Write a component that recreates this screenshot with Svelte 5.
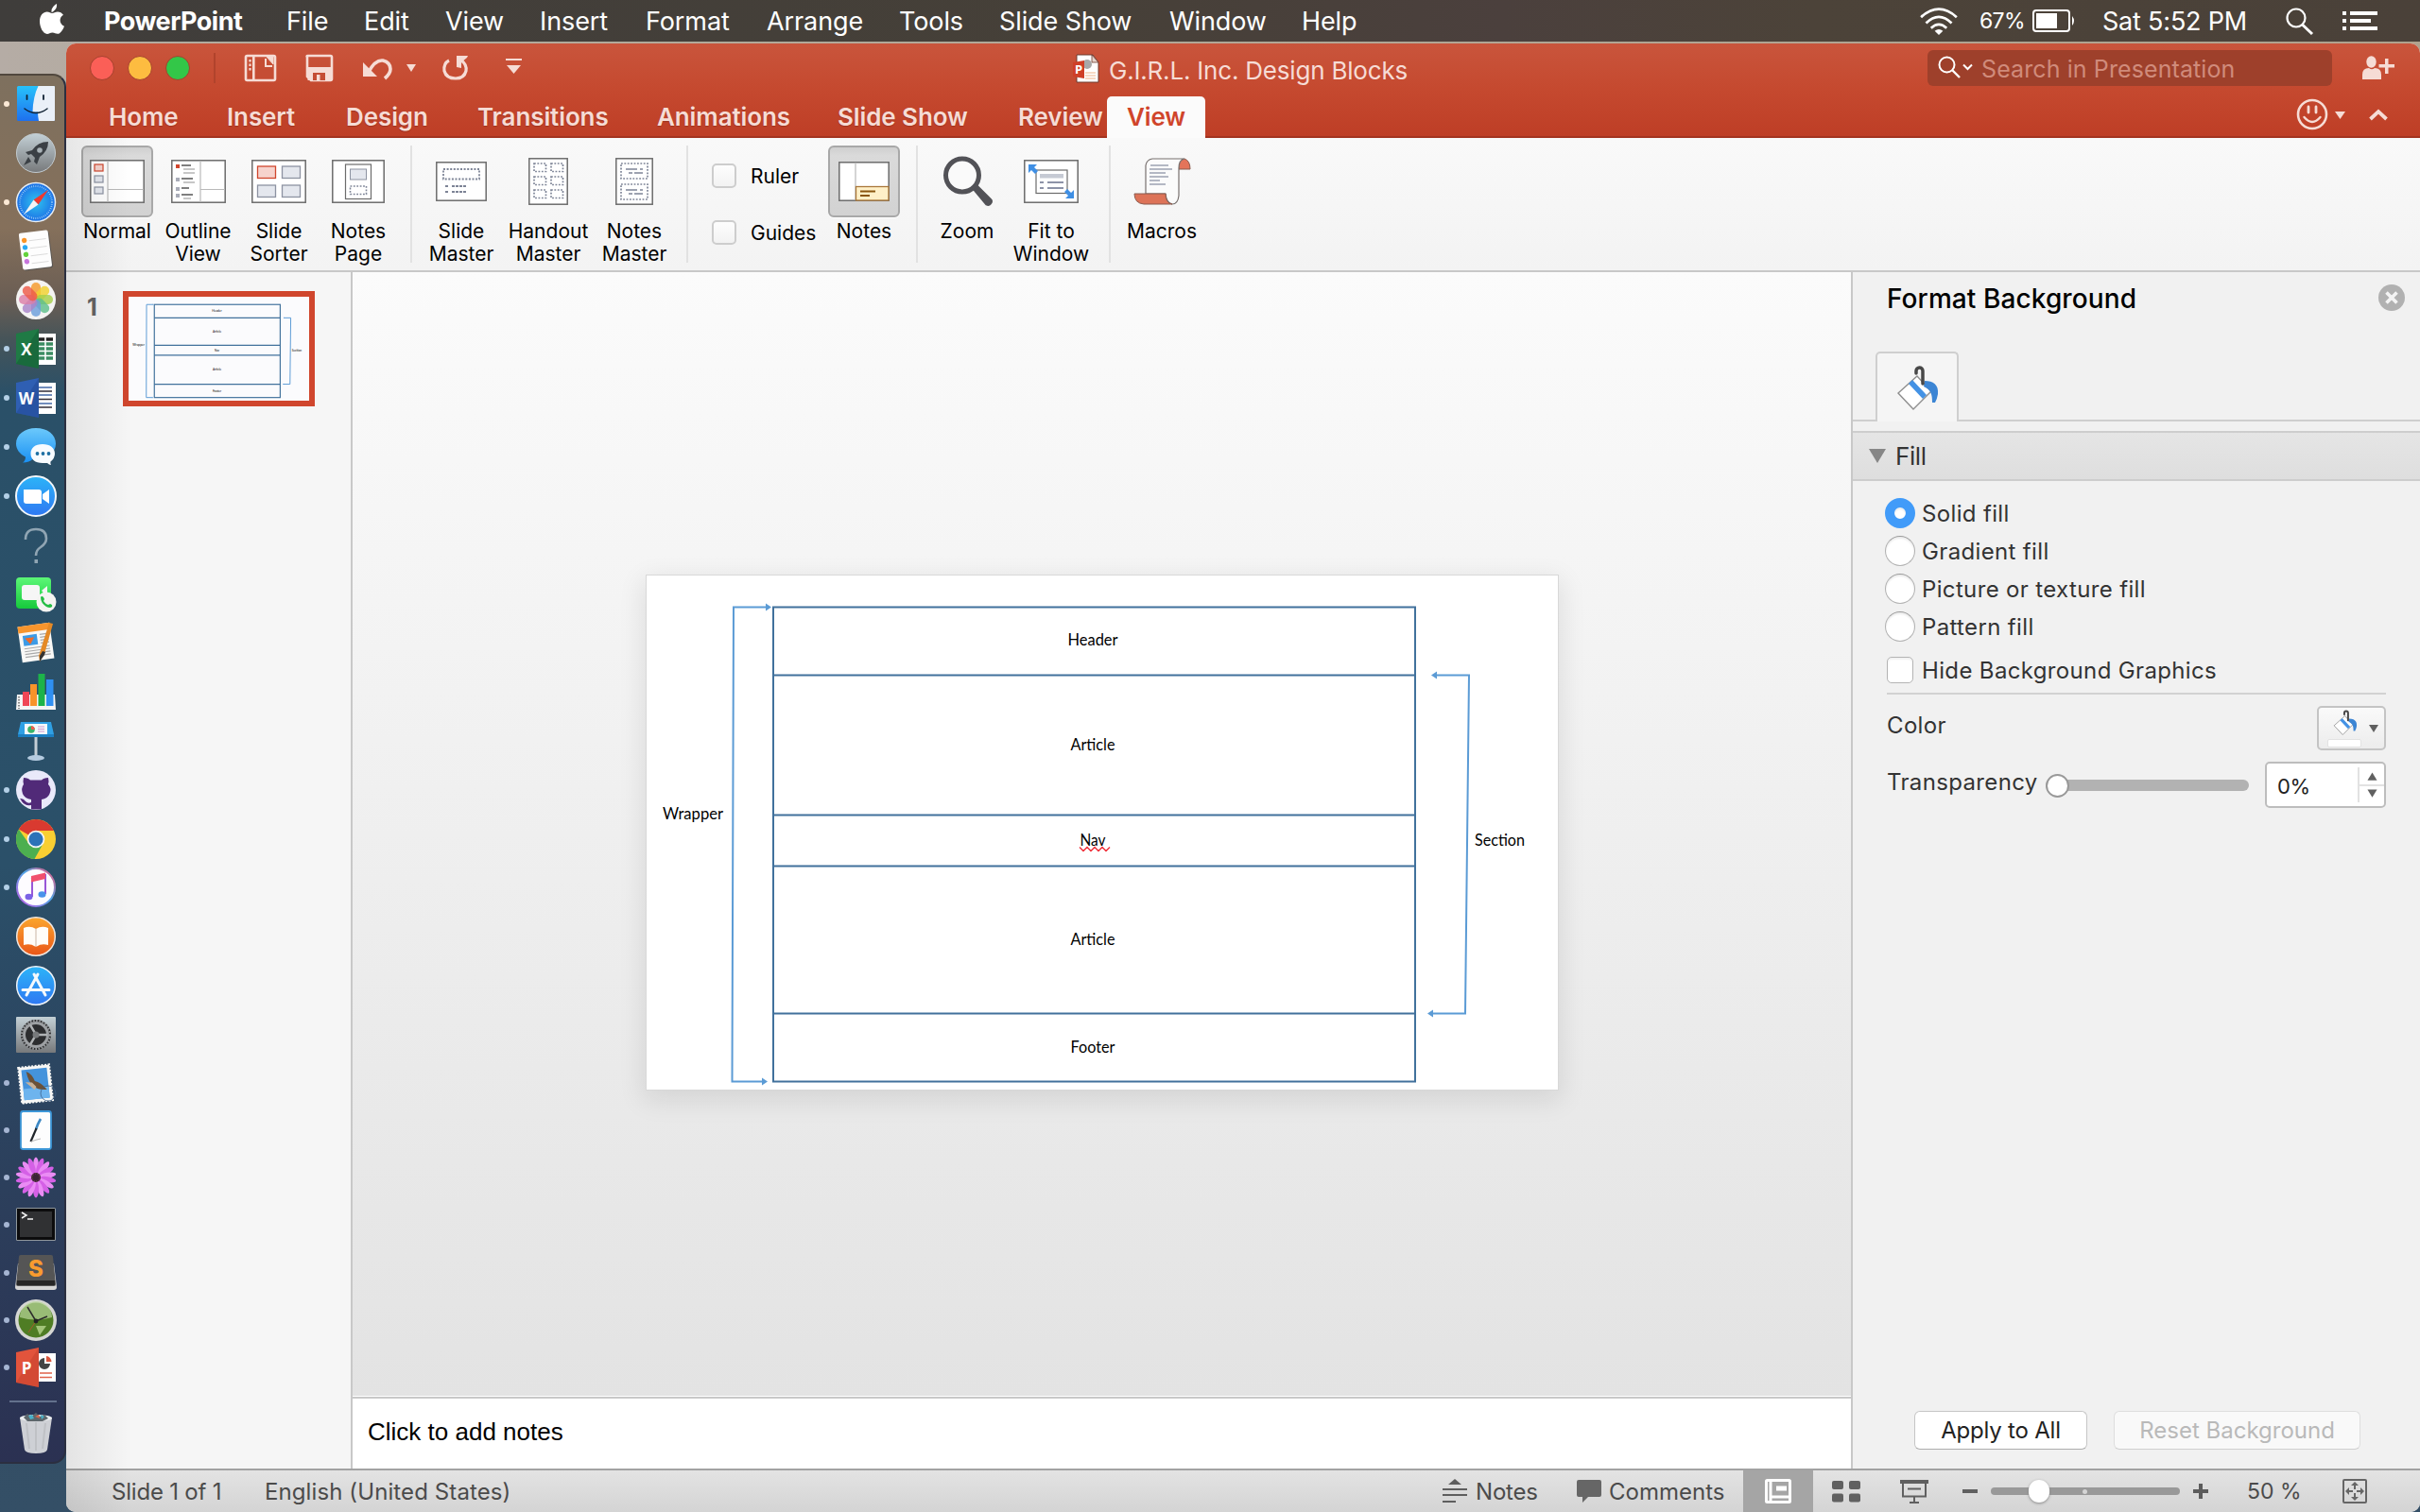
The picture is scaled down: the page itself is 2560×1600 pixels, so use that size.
<script>
  const menus = ['PowerPoint', 'File', 'Edit', 'View', 'Insert', 'Format', 'Arrange', 'Tools', 'Slide Show', 'Window', 'Help'];
  const tabs = ['Home', 'Insert', 'Design', 'Transitions', 'Animations', 'Slide Show', 'Review', 'View'];
  const dockMain = [
    ['finder', true], ['launchpad', false], ['safari', true], ['reminders', false], ['photos', false],
    ['excel', true], ['word', true], ['messages', true], ['zoom', true], ['unknown', false],
    ['facetime', false], ['pages', false], ['numbers', false], ['keynote', false], ['github', true],
    ['chrome', true], ['itunes', true], ['ibooks', false], ['appstore', false], ['prefs', false]
  ];
  const dockExtra = [
    ['mail', true], ['notepad', true], ['flower', true], ['terminal', true],
    ['sublime', true], ['clock', true], ['powerpoint', true]
  ];
  const petals = ['#f59a2c', '#f2d22e', '#a6cf4a', '#5fc08b', '#6c9fdc', '#a985c9', '#dc7fa8', '#ee5a48'];
  const fills = ['Solid fill', 'Gradient fill', 'Picture or texture fill', 'Pattern fill'];
  const blocks = [
    { label: 'Header', y: 73, w: 53 },
    { label: 'Article', y: 184, w: 47 },
    { label: 'Nav', y: 285, w: 27 },
    { label: 'Article', y: 390, w: 47 },
    { label: 'Footer', y: 504, w: 47 }
  ];
</script>

{#snippet slide(line, arrow)}
  <svg class="slide-art" viewBox="0 0 964 543">
    <g fill="none" stroke="#41719c" stroke-width={line}>
      <rect x="134" y="33" width="679" height="502" />
      <path d="M134 105H813M134 253H813M134 307H813M134 463H813" />
    </g>
    <g fill="none" stroke="#5b9bd5" stroke-width={arrow}>
      <path d="M127 33H92L90.500 535H124" />
      <path d="M835 105H870L866 463H830" />
    </g>
    <g fill="#5b9bd5">
      <path d="M126 29l6 4-6 4zM122 531l6 4-6 4zM836 101l-6 4 6 4zM832 459l-6 4 6 4z" />
    </g>
    <g class="slide-text">
      {#each blocks as b}
        <text x={472 - b.w / 2} y={b.y} textLength={b.w} lengthAdjust="spacingAndGlyphs">{b.label}</text>
      {/each}
      <text x="17" y="257" textLength="64" lengthAdjust="spacingAndGlyphs">Wrapper</text>
      <text x="876" y="285" textLength="53" lengthAdjust="spacingAndGlyphs">Section</text>
    </g>
    {#if line < 3}
      <path d="M458 287l4 4 4-4 4 4 4-4 4 4 4-4 4 4 4-4" fill="none" stroke="#f0323c" stroke-width="1.500" />
    {/if}
  </svg>
{/snippet}

{#snippet bucket()}
  <svg class="bucket" viewBox="0 0 44 48">
    <path d="M22 11L37 27L18 46L2 29Z" fill="#fff" stroke="#8e8e8e" stroke-width="1.400" />
    <path d="M16 15l4-4L35 27l-4 4z" fill="#4492e4" transform="translate(-3 4)" />
    <path d="M30 16c9 0 15 4 14 14q-1 6-3 9h-3c0-9-1-13-9-17z" fill="#3c85d4" />
    <path d="M21 8V5.500a3.500 3.500 0 0 1 7 0V19" fill="none" stroke="#484848" stroke-width="3.500" stroke-linecap="round" />
  </svg>
{/snippet}

{#snippet office(colour, dark, letter)}
  {#if letter === 'P'}
    <rect x="22" y="7" width="21" height="30" fill="#fff" />
    <path d="M31 12a6 6 0 1 0 6 6h-6z" fill="#444" />
    <path d="M33 10a6 6 0 0 1 5.500 6H33z" fill="#d9573f" />
    <path d="M26 28h13M26 32.500h13" stroke="#e0634c" stroke-width="1.600" />
  {:else if letter === 'X'}
    <rect x="22" y="6" width="21" height="33" fill="#fff" />
    <path d="M25 12h15" stroke="#222" stroke-width="3.500" />
    <path d="M25 17h15M25 22h15M25 27h15M25 32h15" stroke="#3b8c62" stroke-width="3.500" />
    <path d="M32 8v28" stroke="#fff" stroke-width="1.600" />
  {:else}
    <rect x="22" y="6" width="21" height="33" fill="#fff" />
    <path d="M25 11h14M25 19h14M25 28h14" stroke="#4468a8" stroke-width="1.500" />
    <path d="M25 15h14M25 23.500h14M25 32h14" stroke="#332e38" stroke-width="1.500" />
  {/if}
  <path d="M1 6L25 1V43L1 38Z" fill={colour} />
  <path d="M25 1V43L1 38z" fill={dark} opacity=".35" />
  <text class="office-letter" x="12" y="29" text-anchor="middle">{letter}</text>
{/snippet}

{#snippet dockIcon(name)}
  <svg class="dock-icon" viewBox="0 0 44 44">
    {#if name === 'finder'}
      <rect x="2" y="3" width="40" height="37" rx="1.500" fill="url(#finder)" />
      <path d="M24.500 3H41q1 0 1 1V39q0 1-1 1H25q-1-5-1-9.500h-5.500Q19 14 24.500 3z" fill="#eaf0f8" />
      <path d="M12.500 13v4M30 13v4" stroke="#123" stroke-width="1.800" stroke-linecap="round" />
      <path d="M10 27q12 9 24 0" fill="none" stroke="#123" stroke-width="1.500" stroke-linecap="round" />
    {:else if name === 'launchpad'}
      <circle cx="22" cy="22" r="20.500" fill="url(#silver)" stroke="#c2cbd0" />
      <path d="M35 10q-11 0-17 9l-7 2 3 3 3-1 4 4-1 4 3 3 3-8q9-6 9-16z" fill="#3b4045" />
      <path d="M14 26l-5 9 8-4z" fill="#3b4045" />
      <circle cx="26" cy="19" r="2.800" fill="#a9b2b7" />
    {:else if name === 'safari'}
      <circle cx="22" cy="22" r="20.500" fill="url(#safari)" stroke="#e8eef2" stroke-width="1.500" />
      <circle cx="22" cy="22" r="17" fill="none" stroke="#bfe4fb" stroke-width="2" stroke-dasharray=".6 1.600" />
      <path d="M35 9L24.500 24.500 19.500 19.500z" fill="#f0382e" />
      <path d="M9 35L24.500 24.500 19.500 19.500z" fill="#f4f4f4" />
    {:else if name === 'reminders'}
      <g transform="rotate(-7 22 22)">
        <rect x="7" y="3" width="31" height="39" rx="2" fill="#444a4c" opacity=".6" />
        <rect x="6" y="2" width="31" height="39" rx="2" fill="#fdfdfd" />
        <path d="M16 11h18M16 19h18M16 27h18M16 35h18" stroke="#dcdcdc" />
        <circle cx="11" cy="10" r="2.700" fill="#fb9426" /><circle cx="11" cy="17.500" r="2.700" fill="#29a9f4" />
        <circle cx="11" cy="25" r="2.700" fill="#63d23c" /><circle cx="11" cy="32.500" r="2.700" fill="#c876dc" />
      </g>
    {:else if name === 'photos'}
      <circle cx="22" cy="22" r="21" fill="#f4f3f2" />
      {#each petals as p, i}
        <rect x="17" y="4" width="10" height="18" rx="5" fill={p} opacity=".82" transform="rotate({i * 45} 22 22)" />
      {/each}
    {:else if name === 'excel'}
      {@render office('#1f7a45', '#0f4c2a', 'X')}
    {:else if name === 'word'}
      {@render office('#2f5fb3', '#1d3f86', 'W')}
    {:else if name === 'powerpoint'}
      {@render office('#e2543c', '#b63a25', 'P')}
    {:else if name === 'messages'}
      <path d="M22 2C10 2 1 9 1 18.500c0 6 4 11 10 14q0 4-3 6 7 0 11-4c14 1 24-6 24-16S34 2 22 2z" fill="url(#msg)" />
      <path d="M29 19c-8 0-12.500 4-12.500 10S21 39 29 39q3 0 5 0 2 2 4 2-1-2-.5-3.500Q42 34 42 29c0-6-5-10-13-10z" fill="#f7fbff" />
      <g fill="#1d6fa3"><circle cx="23.500" cy="29" r="1.900" /><circle cx="29.500" cy="29" r="1.900" /><circle cx="35.500" cy="29" r="1.900" /></g>
    {:else if name === 'zoom'}
      <circle cx="22" cy="22" r="21" fill="url(#blue)" stroke="#f2f6fa" stroke-width="2" />
      <path d="M9 15h16q3 0 3 3v12H12q-3 0-3-3zM29 20l7-5v15l-7-5z" fill="#fff" />
    {:else if name === 'unknown'}
      <path d="M11 16q0-11 11-11t11 10q0 5-6 9-5 3-5 9" fill="none" stroke="#90a5b3" stroke-width="2.600" />
      <rect x="20.500" y="37" width="3.500" height="4" fill="#90a5b3" />
    {:else if name === 'facetime'}
      <rect x="1" y="5" width="37" height="33" rx="4" fill="url(#green)" />
      <rect x="7" y="13" width="19" height="16" rx="3" fill="#f6f6f6" />
      <path d="M28 19l6-5v12z" fill="#f6f6f6" />
      <circle cx="33" cy="31" r="10.500" fill="#f4f4f2" />
      <path d="M27 26q1-2 3 0l1 2-1 2q2 3 5 4l2-1q3 1 2 3-2 2-6 0-6-4-6-10z" fill="#25bd45" />
    {:else if name === 'pages'}
      <g transform="rotate(-8 22 22)">
        <rect x="5" y="3" width="34" height="38" fill="#f8f8f6" />
        <rect x="5" y="3" width="34" height="7" fill="#f7952d" />
        <rect x="9" y="13" width="15" height="11" fill="#3c9be6" />
        <path d="M11 16h10l-5 7z" fill="#f06a28" />
        <path d="M27 14h9M27 17h9M27 20h9M27 23h9M9 27h27M9 30h27M9 33h27M9 36h27" stroke="#a9a9a9" stroke-width="1.200" />
      </g>
      <path d="M36 1l4 1-9 32-5 8-1-6z" fill="#e58a26" />
      <path d="M29 31l3 1-1 3-5 7 0-6z" fill="#333" />
    {:else if name === 'numbers'}
      <path d="M2 25h40l1 16H1z" fill="#f5f5f5" />
      <path d="M4 27v13" stroke="#888" stroke-dasharray="1.500 1.500" stroke-width="2" />
      <rect x="8" y="22" width="7" height="15" fill="#ef4656" /><rect x="16" y="14" width="7" height="23" fill="#f8932a" />
      <rect x="24.500" y="3" width="7" height="34" fill="#1db34a" /><rect x="33" y="9" width="7.500" height="28" fill="#2f90f2" />
    {:else if name === 'keynote'}
      <path d="M6 2h32l3 13H3z" fill="#2fa0e4" /><path d="M3 15h38v3H3z" fill="#1b7fc2" />
      <rect x="10" y="4" width="24" height="11" fill="#f5f8fa" />
      <circle cx="17" cy="10" r="3.800" fill="#3cb36a" /><path d="M17 10V6.200a3.800 3.800 0 0 1 3.800 3.800z" fill="#f1584c" />
      <path d="M24 7h7M24 9.500h7M24 12h7" stroke="#d49ad0" stroke-width="1.200" />
      <path d="M20.500 18h3v20h-3z" fill="#c4ced6" /><ellipse cx="22" cy="40" rx="9" ry="3" fill="#b5cbe0" />
    {:else if name === 'github'}
      <circle cx="22" cy="22" r="21" fill="#e9e9fa" />
      <path d="M9 9q5 0 7 2.500h12Q30 9 35 9q1 4 0 7 4 4 1.500 10-2 5-8.500 6v10.500H17V38q-7 1-10-4-1-2-2-3 4 0 6 3 3 3 6 1v-3Q10 31 8 26q-2-6 1-10-1-3 0-7z" fill="#512a78" />
    {:else if name === 'chrome'}
      <circle cx="22" cy="22" r="21" fill="#f9cf32" />
      <path d="M22 22L3.800 11.500A21 21 0 0 1 41 13H22z" fill="#d93a30" />
      <path d="M22 22L30 26 20.500 43A21 21 0 0 1 3.800 11.500L14 26z" fill="#4caf50" />
      <circle cx="22" cy="22" r="9.300" fill="#f5f5f5" /><circle cx="22" cy="22" r="7.600" fill="#2c72b8" />
    {:else if name === 'itunes'}
      <circle cx="22" cy="22" r="20" fill="#fdfcff" stroke="url(#tunes)" stroke-width="2" />
      <path d="M17 13l15-4v20M18 32V13.500" fill="none" stroke="#9857d8" stroke-width="2" />
      <path d="M17 10l15-3.500V13L17 16.500z" fill="#f1506e" />
      <ellipse cx="14.500" cy="32" rx="4" ry="3.300" fill="#7b62e6" /><ellipse cx="28.500" cy="29.500" rx="4" ry="3.300" fill="#4a92ea" />
    {:else if name === 'ibooks'}
      <circle cx="22" cy="22" r="20.300" fill="url(#orange)" stroke="#efe6df" stroke-width="1.500" />
      <path d="M22 14q-6-4-13-1v18q7-2 12 1.500h2q5-3.500 12-1.500V13q-7-3-13 1z" fill="#fffdf8" />
      <path d="M22 14v18" stroke="#c9b5a5" />
    {:else if name === 'appstore'}
      <circle cx="22" cy="22" r="20.300" fill="url(#blue)" stroke="#eef3f8" stroke-width="1.500" />
      <path d="M8 26.500h28M24 10L12 32M20 10l12 22" fill="none" stroke="#f5f9fc" stroke-width="3" stroke-linecap="round" />
    {:else if name === 'prefs'}
      <rect x="1" y="3" width="42" height="38" rx="1" fill="url(#silver)" />
      <circle cx="22" cy="22" r="16" fill="#2c2d2f" />
      <circle cx="22" cy="22" r="12.500" fill="none" stroke="#9da0a3" stroke-width="3" />
      <circle cx="22" cy="22" r="15" fill="none" stroke="#9da0a3" stroke-width="2" stroke-dasharray="1.600 1.600" />
      <path d="M22 22H34M22 22L16 11.600M22 22L16 32.400" stroke="#b0b3b5" stroke-width="2.500" />
      <circle cx="22" cy="22" r="3.500" fill="#77797b" />
    {:else if name === 'mail'}
      <g transform="rotate(-6 22 22)">
        <rect x="5" y="4" width="33" height="38" fill="#f7f7f5" stroke="#f7f7f5" stroke-width="2" stroke-dasharray="2 1.500" />
        <rect x="8" y="7" width="27" height="32" fill="#4493dc" />
        <rect x="8" y="27" width="27" height="12" fill="#6db4ee" />
        <path d="M13 9q6 3 8 11 6 2 12 10-10 0-14-5-5-5-6-16z" fill="#6b5138" />
        <path d="M11 20l7 1 4 5-2 3z" fill="#c9b298" />
      </g>
      <circle cx="35" cy="33" r="8" fill="none" stroke="#3a5a80" opacity=".7" />
    {:else if name === 'notepad'}
      <rect x="6" y="2" width="32" height="40" rx="2.500" fill="#fdfdfd" stroke="#3c97d8" stroke-width="1.800" />
      <path d="M27 10q-3 5-5 11" stroke="#3c88c4" stroke-width="2.600" fill="none" />
      <path d="M22.500 20l-6 14" stroke="#20252a" stroke-width="2.200" />
      <path d="M17 34q5-2 10-3" stroke="#b9b9b9" fill="none" />
    {:else if name === 'flower'}
      {#each Array(18) as _, i}
        <ellipse cx="22" cy="9.500" rx="3" ry="9" fill={i % 2 ? '#d560e6' : '#ea8cf4'} transform="rotate({i * 20} 22 22)" />
      {/each}
      <circle cx="22" cy="22" r="5" fill="#3a2238" /><circle cx="22" cy="22" r="4" fill="none" stroke="#8d5a50" stroke-dasharray="1 1.500" />
    {:else if name === 'terminal'}
      <rect x="1" y="4" width="42" height="35" rx="1.500" fill="#8f979c" /><rect x="2" y="5" width="40" height="33" fill="#0c0c0d" />
      <rect x="5" y="8" width="34" height="27" fill="#303133" />
      <path d="M7 9l5 3-5 3M13 16h6" fill="none" stroke="#f4f4f4" stroke-width="1.500" />
    {:else if name === 'sublime'}
      <path d="M3 12L0 37q0 3 3 3H41q3 0 3-3L41 12z" fill="#d6d6d6" />
      <path d="M6 3H38q2 0 2 2l3 29q0 2-2 2H3q-2 0-2-2L4 5q0-2 2-2z" fill="#555" />
      <path d="M2 30h40v5H2z" fill="#262626" />
      <text class="sublime-letter" x="22" y="26" text-anchor="middle">S</text>
    {:else if name === 'clock'}
      <circle cx="22" cy="22" r="22" fill="#d5d6d3" /><circle cx="22" cy="22" r="18.500" fill="#4f7d24" />
      <path d="M5 19a17 17 0 0 1 34 0q-17 5-34 0z" fill="#b9d79a" opacity=".7" />
      <path d="M22 28h11l-7 10z" fill="#c6e29c" opacity=".7" />
      <path d="M13 8l9 15M34 18l-12 5" stroke="#2c2c2c" stroke-width="1.500" /><path d="M22 23l-8 12" stroke="#a65a2c" />
      <circle cx="22" cy="23" r="2.400" fill="#222" />
    {:else if name === 'trash'}
      <path d="M5 4h34l-5 34q-1 4-12 4t-12-4z" fill="#d7d9dc" opacity=".95" />
      <path d="M12 10l3 27M22 9v30M32 10l-3 27" stroke="#bfc1c5" stroke-width="2" fill="none" />
      <ellipse cx="22" cy="4.500" rx="17" ry="3.600" fill="#eceef0" />
      <path d="M9 4l4-4 4 3 5-4 4 4 5-2 4 4-6 3H13z" fill="#5d666b" /><path d="M14 2l4-1 2 4-4 1zM27 1l4 2-3 3z" fill="#49b0c8" />
      <path d="M21 3l4-2 1 4z" fill="#d9634a" />
    {/if}
  </svg>
{/snippet}

<svg class="defs" width="0" height="0">
  <defs>
    <linearGradient id="finder" x1="0" y1="0" x2="0" y2="1"><stop offset="0" stop-color="#27c2fb" /><stop offset="1" stop-color="#1e70ee" /></linearGradient>
    <linearGradient id="silver" x1="0" y1="0" x2="0" y2="1"><stop offset="0" stop-color="#c3d0d6" /><stop offset="1" stop-color="#77797b" /></linearGradient>
    <radialGradient id="safari"><stop offset="0" stop-color="#2fc3ee" /><stop offset="1" stop-color="#1c6fe6" /></radialGradient>
    <linearGradient id="msg" x1="0" y1="0" x2="0" y2="1"><stop offset="0" stop-color="#6cc9fb" /><stop offset="1" stop-color="#1a91f4" /></linearGradient>
    <linearGradient id="blue" x1="0" y1="0" x2="0" y2="1"><stop offset="0" stop-color="#2cb4f8" /><stop offset="1" stop-color="#2f78f2" /></linearGradient>
    <linearGradient id="green" x1="0" y1="0" x2="0" y2="1"><stop offset="0" stop-color="#5cf777" /><stop offset="1" stop-color="#16c93c" /></linearGradient>
    <linearGradient id="orange" x1="0" y1="0" x2="0" y2="1"><stop offset="0" stop-color="#fba62c" /><stop offset="1" stop-color="#ea5618" /></linearGradient>
    <linearGradient id="tunes" x1="1" y1="0" x2="0" y2="1"><stop offset="0" stop-color="#f9557a" /><stop offset=".45" stop-color="#4fa5e8" /><stop offset="1" stop-color="#c85ae8" /></linearGradient>
  </defs>
</svg>

<div class="screen">
  <header class="menubar">
    <svg class="apple" viewBox="0 0 26 32">
      <path d="M18 0q.5 4-2 6.500T12.500 9Q12 5.500 14.300 3T18 0z" />
      <path d="M13 10c2 0 3.500-1.600 6-1.600 2.300 0 4.600 1.200 6 3.300-5 2.800-4.300 9.800 1 12-1.500 4-4.200 8.100-7 8.100-2.300 0-3-1.300-5.600-1.300-2.500 0-3.500 1.400-5.500 1.400C3.700 31.900 0 25 0 18.500 0 12 4 8.400 7.700 8.400 10 8.400 11.700 10 13 10z" />
    </svg>
    <nav class="menus">
      {#each menus as m, i}<span class:app-name={i === 0}>{m}</span>{/each}
    </nav>
    <div class="tray">
      <svg class="wifi" viewBox="0 0 42 30">
        <g fill="none" stroke="#fff" stroke-width="2.800"><path d="M1.500 10.500Q21-7 40.500 10.500M7 17Q21 3.500 35 17M12.500 22.500Q21 14.500 29.500 22.500" /></g>
        <path d="M16.500 25.500q4.500-3.500 9 0L21 30z" fill="#fff" />
      </svg>
      <span class="percent">67%</span>
      <svg class="battery" viewBox="0 0 46 24">
        <rect x="1" y="1" width="38" height="22" rx="3" fill="none" stroke="#fff" stroke-width="2" />
        <rect x="4" y="4" width="22" height="16" fill="#fff" /><path d="M42 7q4 5 0 10z" fill="#fff" />
      </svg>
      <span class="time">Sat 5:52 PM</span>
      <svg class="spot" viewBox="0 0 29 29"><circle cx="11" cy="11" r="9.500" fill="none" stroke="#fff" stroke-width="2.200" /><path d="M17.500 18L28 28" stroke="#fff" stroke-width="3" /></svg>
      <svg class="list" viewBox="0 0 37 20" fill="#fff"><path d="M0 0h4v4H0zM8 0h29v4H8zM0 8h4v4H0zM8 8h22v4H8zM0 16h4v4H0zM8 16h29v4H8z" /></svg>
    </div>
  </header>

  <div class="desktop">
    <aside class="dock">
      <div class="dock-group main">
        {#each dockMain as [name, on]}
          <div class="dock-item"><i class:on></i>{@render dockIcon(name)}</div>
        {/each}
      </div>
      <div class="dock-group extra">
        {#each dockExtra as [name, on]}
          <div class="dock-item"><i class:on></i>{@render dockIcon(name)}</div>
        {/each}
      </div>
      <hr />
      <div class="dock-item trash"><i></i>{@render dockIcon('trash')}</div>
    </aside>

    <main class="window">
      <div class="titlebar">
        <div class="title-row">
          <div class="lights"><b class="red"></b><b class="yellow"></b><b class="green"></b></div>
          <span class="rule"></span>
          <svg class="quick" viewBox="0 0 300 30" fill="none" stroke="#f6dcd5">
            <rect x="1" y="2" width="31" height="26" rx="1.500" stroke-width="2.600" />
            <path d="M9.500 2v26" stroke-width="2.200" /><path d="M5.500 6v12" stroke-width="2.200" stroke-dasharray="2.500 2" />
            <path d="M13 6h9l7 7v12H13z" fill="#c54d34" stroke="none" />
            <path d="M9 3v24M22 5v8h7" stroke-width="2" /><path d="M23 3h7v8z" fill="#f6dcd5" />
            <path d="M66.500 2h24q1.500 0 1.500 1.500v23q0 1.500-1.500 1.500H70l-4-4V3.500Q65 2 66.500 2z" stroke-width="2.600" />
            <path d="M66 15.500h26M68 16v12M90 16v12" stroke-width="3" />
            <path d="M66 16h25v11H70l-4-3z" fill="#f6dcd5" stroke="none" /><path d="M72 20h13v8H72z" fill="#c54d34" stroke="none" /><path d="M76 22h3.500v6H76z" fill="#f6dcd5" stroke="none" />
            <path d="M131 19q7-13 15-12 8 2 8 9 0 5-6 10" stroke-width="3.600" />
            <path d="M125 9v15h15z" fill="#f6dcd5" stroke="none" />
            <path d="M171 11h10l-5 8z" fill="#f6dcd5" stroke="none" />
            <path d="M216 7q-6 3-5 11 2 8 12 8 9 0 11-8 1-7-5-11" stroke-width="3.200" />
            <path d="M224 2h12l-1 2-6 5v6l-5-1z" fill="#f6dcd5" stroke="none" />
            <path d="M276 6h17" stroke-width="2" /><path d="M277 12h15l-7.500 9z" fill="#f6dcd5" stroke="none" />
          </svg>
          <div class="doc-title">
            <svg class="doc-icon" viewBox="0 0 28 31">
              <path d="M4 1h17l6 8v21H4z" fill="#fff" stroke="#6d3a2e" /><path d="M20 1v8h7z" fill="#e6d4cc" stroke="#6d3a2e" stroke-width=".8" />
              <circle cx="15" cy="11" r="5" fill="#a8a8a8" /><path d="M13 20h11M13 23h11M13 26h11" stroke="#efb389" stroke-width="1.200" />
              <path d="M0 9l12-2v19l-12-2z" fill="#cf3f27" /><text class="doc-p" x="6" y="21" text-anchor="middle">P</text>
            </svg>
            <span>G.I.R.L. Inc. Design Blocks</span>
          </div>
          <div class="search">
            <svg viewBox="0 0 37 24" fill="none" stroke="#fff"><circle cx="9.500" cy="9.500" r="8" stroke-width="2" /><path d="M15.500 15.500L23 23" stroke-width="2.400" /><path d="M27 9.500l4.500 4.500L36 9.500" stroke-width="2" /></svg>
            <span>Search in Presentation</span>
          </div>
          <svg class="share" viewBox="0 0 36 26" fill="#f6dcd5"><ellipse cx="10.500" cy="6.500" rx="5.200" ry="6.200" /><path d="M1 25v-5q0-7 7-7 3 2.500 6 0 7 0 7 7v5zM25 3h3.500v6H35v3.500h-6.500V19H25v-6.500h-6.500V9H25z" /></svg>
        </div>
        <nav class="tabs">
          {#each tabs as t}<span class:active={t === 'View'}>{t}</span>{/each}
          <svg class="feedback" viewBox="0 0 98 34" fill="none" stroke="#f6dcd5">
            <circle cx="17" cy="17" r="15" stroke-width="2.600" /><path d="M13 9v6M21 9v6" stroke-width="2.800" stroke-linecap="round" /><path d="M8.500 20q8.500 10 17 0" stroke-width="2.400" stroke-linecap="round" />
            <path d="M41 14h11l-5.500 8z" fill="#f6dcd5" stroke="none" /><path d="M78.500 22l8.500-8 8.500 8" stroke-width="3.800" />
          </svg>
        </nav>
      </div>

      <div class="ribbon">
        <div class="tool w84"><div class="frame pressed">
          <svg width="58" height="46" viewBox="0 0 58 46"><rect x=".8" y=".8" width="56.400" height="44.400" fill="#fff" stroke="#6c6c6c" stroke-width="1.500" /><path d="M19 1v44M19 31.500h38" stroke="#b9b9b9" stroke-width="1.200" /><rect x="5" y="5" width="9" height="7" fill="#f6d3cd" stroke="#d0462d" stroke-width="1.200" /><g fill="#e4e7ee" stroke="#8d93a2" stroke-width="1.200"><rect x="5" y="17" width="9" height="7" /><rect x="5" y="29" width="9" height="7" /></g></svg>
        </div><span>Normal</span></div>
        <div class="tool w87"><div class="frame">
          <svg width="58" height="46" viewBox="0 0 58 46"><rect x=".8" y=".8" width="56.400" height="44.400" fill="#fff" stroke="#6c6c6c" stroke-width="1.500" /><path d="M31 1v44M31 31.500h26" stroke="#b9b9b9" stroke-width="1.200" /><path d="M5 5h4v4H5z" fill="#d0462d" /><path d="M5 19h4v4H5zM5 29h4v4H5zM5 36h4v4H5z" fill="#a9acb8" /><path d="M11 6h10M11 20h12M11 30h8M11 37h12" stroke="#555" stroke-width="1.600" /><path d="M13 10h12M13 14h12M13 24h12M13 41h8" stroke="#b5b5b5" stroke-width="1.600" /></svg>
        </div><span>Outline<br />View</span></div>
        <div class="tool w84"><div class="frame">
          <svg width="58" height="46" viewBox="0 0 58 46"><rect x=".8" y=".8" width="56.400" height="44.400" fill="#fff" stroke="#6c6c6c" stroke-width="1.500" /><rect x="6.500" y="7" width="19" height="12.500" fill="#f6d3cd" stroke="#d0462d" stroke-width="1.300" /><g fill="#e4e7ee" stroke="#8d93a2" stroke-width="1.300"><rect x="32.500" y="7" width="19" height="12.500" /><rect x="6.500" y="27" width="19" height="12.500" /><rect x="32.500" y="27" width="19" height="12.500" /></g></svg>
        </div><span>Slide<br />Sorter</span></div>
        <div class="tool w84"><div class="frame">
          <svg width="56" height="46" viewBox="0 0 56 46"><rect x=".8" y=".8" width="54.400" height="44.400" fill="#fff" stroke="#6c6c6c" stroke-width="1.500" /><rect x="14.500" y="5" width="27" height="36.500" fill="#fff" stroke="#6c6c6c" stroke-width="1.200" /><rect x="19.500" y="10" width="17" height="11" fill="#e4e7ee" stroke="#8d93a2" /><rect x="19.500" y="28" width="17" height="8.500" fill="none" stroke="#7d8496" stroke-width="1.600" stroke-dasharray="1.800 1.600" /></svg>
        </div><span>Notes<br />Page</span></div>
        <div class="divider d1"></div>
        <div class="tool w92"><div class="frame">
          <svg width="54" height="42" viewBox="0 0 54 42"><rect x=".8" y=".8" width="52.400" height="40.400" fill="#fff" stroke="#6c6c6c" stroke-width="1.500" /><rect x="8" y="8" width="38" height="10.500" fill="none" stroke="#7d8496" stroke-width="1.800" stroke-dasharray="2 1.600" /><g stroke="#7d8496" stroke-width="1.800"><path d="M10 26h3M10 32h3" /><path d="M17 26h16M17 32h16" stroke-dasharray="3 1" /></g></svg>
        </div><span>Slide<br />Master</span></div>
        <div class="tool w92"><div class="frame">
          <svg width="42" height="50" viewBox="0 0 42 50"><rect x=".8" y=".8" width="40.400" height="48.400" fill="#fff" stroke="#6c6c6c" stroke-width="1.500" /><g fill="none" stroke="#7d8496" stroke-width="1.700" stroke-dasharray="1.800 1.600"><rect x="6" y="6" width="12.500" height="8.500" /><rect x="24" y="6" width="12.500" height="8.500" /><rect x="6" y="20" width="12.500" height="8.500" /><rect x="24" y="20" width="12.500" height="8.500" /><rect x="6" y="34" width="12.500" height="8.500" /><rect x="24" y="34" width="12.500" height="8.500" /></g></svg>
        </div><span>Handout<br />Master</span></div>
        <div class="tool w90"><div class="frame">
          <svg width="40" height="50" viewBox="0 0 40 50"><rect x=".8" y=".8" width="38.400" height="48.400" fill="#fff" stroke="#6c6c6c" stroke-width="1.500" /><g fill="none" stroke="#7d8496" stroke-width="1.700"><g stroke-dasharray="1.800 1.600"><rect x="6" y="6" width="28" height="16" /><rect x="6" y="28" width="28" height="16" /></g><path d="M11 12h12M14 16h4M20 16h9M26 12h3M11 34h12M14 38h4M20 38h9M26 34h3" stroke-width="1.500" /></g></svg>
        </div><span>Notes<br />Master</span></div>
        <div class="divider d2"></div>
        <div class="checks"><label><i></i>Ruler</label><label><i></i>Guides</label></div>
        <div class="tool w92"><div class="frame pressed">
          <svg width="54" height="42" viewBox="0 0 54 42"><rect x=".8" y=".8" width="52.400" height="40.400" fill="#fff" stroke="#6c6c6c" stroke-width="1.500" /><path d="M18 1v40" stroke="#b9b9b9" stroke-width="1.200" /><rect x="18.500" y="26.500" width="34.500" height="14.500" fill="#fff0c8" stroke="#a9773a" stroke-width="1.300" /><path d="M23 31.500h16M23 36h10" stroke="#8a560f" stroke-width="2" /></svg>
        </div><span class="notes-label">Notes</span></div>
        <div class="divider d3"></div>
        <div class="tool w88"><div class="frame">
          <svg width="53" height="54" viewBox="0 0 53 54"><circle cx="21" cy="20.500" r="17.500" fill="#fafafa" stroke="#525257" stroke-width="5" /><path d="M32 34l3.500-3.500L51 46q2 2 0 4.500t-4.500 1z" fill="#525257" stroke="#525257" stroke-width="2" stroke-linejoin="round" /></svg>
        </div><span>Zoom</span></div>
        <div class="tool w90"><div class="frame">
          <svg width="58" height="46" viewBox="0 0 58 46"><rect x=".8" y=".8" width="56.400" height="44.400" fill="#fff" stroke="#6c6c6c" stroke-width="1.500" /><rect x="13" y="11" width="33" height="24.500" fill="#fff" stroke="#6c6c6c" stroke-width="1.200" /><path d="M17 15h25v4.500H17z" fill="#c6cad4" /><path d="M17 24h4M25 24h17M17 30h4M25 30h17" stroke="#8d93a8" stroke-width="1.800" /><path d="M3 4h11L3 15zM55 42H42l11-11z" fill="#fff" /><path d="M5 5h9l-3 3 4 4-3 3-4-4-3 3zM53 41h-9l3-3-4-4 3-3 4 4 3-3z" fill="#3f8fe4" /></svg>
        </div><span>Fit to<br />Window</span></div>
        <div class="divider d4"></div>
        <div class="tool w88"><div class="frame">
          <svg width="61" height="50" viewBox="0 0 61 50"><path d="M54 1q6 2 6 11H48V8q1-6 6-7z" fill="#e4745a" stroke="#8b5b4e" /><path d="M20 1h34q-6 1-6 10v29q-1 9-7 9-6-1-7-11H13V8q1-6 7-7z" fill="#fbfbfb" stroke="#77706e" stroke-width="1.200" /><path d="M1 38h33q0 10 7 11H11Q1 48 1 38z" fill="#dd7358" stroke="#8b5b4e" /><path d="M18 8h19M17 12h24M17 16h17M17 20h20M17 24h11M17 28h17" stroke="#b4b8c4" stroke-width="1.900" /></svg>
        </div><span>Macros</span></div>
      </div>

      <div class="workspace">
        <section class="thumbs"><b>1</b><div class="thumb">{@render slide(6, 5)}</div></section>
        <section class="editor">
          <div class="canvas"><div class="slide">{@render slide(2, 2)}</div></div>
          <div class="notes">Click to add notes</div>
        </section>
        <section class="pane">
          <div class="pane-head"><h2>Format Background</h2>
            <svg width="28" height="28" viewBox="0 0 28 28"><circle cx="14" cy="14" r="14" fill="#b1b1b1" /><path d="M8.500 8.500l11 11M19.500 8.500l-11 11" stroke="#f4f4f4" stroke-width="3.600" /></svg>
          </div>
          <div class="pane-tabs"><div class="pane-tab">{@render bucket()}</div></div>
          <div class="fill-head"><svg width="18" height="15" viewBox="0 0 18 15"><path d="M0 0h18L9 15z" fill="#868686" /></svg>Fill</div>
          <div class="options">
            {#each fills as f, i}
              <label class="radio f{i}"><i class:checked={i === 0}></i><span>{f}</span></label>
            {/each}
            <label class="hide"><i></i><span>Hide Background Graphics</span></label>
          </div>
          <div class="row color"><span>Color</span>
            <div class="color-btn"><div class="swatch">{@render bucket()}<em></em></div><svg width="10" height="8" viewBox="0 0 10 8"><path d="M0 0h10L5 8z" fill="#606060" /></svg></div>
          </div>
          <div class="row transparency"><span>Transparency</span>
            <div class="slider"><i></i></div>
            <div class="spin"><span>0%</span><div class="steps"><svg viewBox="0 0 12 9"><path d="M6 0l5.500 9H.5z" fill="#606060" /></svg><svg viewBox="0 0 12 9"><path d="M.5 0h11L6 9z" fill="#606060" /></svg></div></div>
          </div>
          <div class="buttons"><button class="apply">Apply to All</button><button class="reset" disabled>Reset Background</button></div>
        </section>
      </div>

      <footer class="status">
        <span class="count">Slide 1 of 1</span><span class="lang">English (United States)</span>
        <div class="status-right">
          <svg width="26" height="26" viewBox="0 0 26 26"><path d="M6 6l7-6 7 6z" fill="#5e5e5e" /><path d="M0 11h26M0 17h26M0 24h14" stroke="#5e5e5e" stroke-width="2" /></svg>
          <span class="s-notes">Notes</span>
          <svg width="26" height="24" viewBox="0 0 26 24"><path d="M2 0h22q2 0 2 2v14q0 2-2 2H12l-6 6v-6H2q-2 0-2-2V2q0-2 2-2z" fill="#666" /></svg>
          <span class="s-comments">Comments</span>
          <div class="normal-view"><svg width="28" height="26" viewBox="0 0 28 26"><rect x="1.500" y="1.500" width="25" height="23" rx="1" fill="none" stroke="#fff" stroke-width="3" /><path d="M6 0v26M7 19h20" stroke="#fff" stroke-width="3" /><path d="M12 7.500h11v5H12z" fill="#fff" /></svg></div>
          <svg class="sorter" width="30" height="22" viewBox="0 0 30 22" fill="#606060"><rect width="12" height="9" rx="2" /><rect x="18" width="12" height="9" rx="2" /><rect y="13.500" width="12" height="9" rx="2" /><rect x="18" y="13.500" width="12" height="9" rx="2" /></svg>
          <svg class="show" width="30" height="25" viewBox="0 0 30 25" fill="none" stroke="#606060"><path d="M0 2h30" stroke-width="4" /><path d="M3 3v14.500h24V3M15 17v6M10 24h10" stroke-width="2" /><path d="M8 9.500h14" stroke-width="2" /></svg>
          <i class="minus"></i>
          <div class="zoom-track"><em></em><b></b></div>
          <svg class="plus" width="16" height="16" viewBox="0 0 16 16"><path d="M0 8h16M8 0v16" stroke="#5c5c5c" stroke-width="4" /></svg>
          <span class="s-zoom">50 %</span>
          <svg width="28" height="28" viewBox="0 0 28 28"><rect x="2" y="2" width="24" height="24" rx="1" fill="none" stroke="#666" stroke-width="2" /><path d="M14 4l4 4h-3v4h-2V8h-3zM14 24l4-4h-3v-4h-2v4h-3zM4 14l4-4v3h4v2H8v3zM24 14l-4-4v3h-4v2h4v3z" fill="#666" /></svg>
        </div>
      </footer>
    </main>
  </div>
</div>

<style>
  :global(body) { margin: 0; background: #2d4a62; }
  * { box-sizing: border-box; }
  .defs { position: absolute; }
  .screen { width: 2560px; height: 1600px; overflow: hidden; font-family: Inter, 'Liberation Sans', sans-serif; display: flex; flex-direction: column; white-space: nowrap; }
  svg { display: block; flex: none; overflow: visible; }

  .menubar { height: 44px; flex: none; display: flex; align-items: center; color: #fff; background: linear-gradient(90deg, #3f3d3b, #464038 45%, #4b403d 62%, #4c4339 75%, #4a4139); font-size: 27px; }
  .apple { width: 26px; height: 32px; margin: -4px 42px 0; fill: #fff; }
  .menus { display: grid; grid-template-columns: 193px 82px 86px 100px 112px 128px 140px 106px 180px 140px 100px; letter-spacing: -.1px; }
  .app-name { font-weight: 700; letter-spacing: -.5px; }
  .tray { display: flex; align-items: center; margin-left: auto; padding-right: 45px; }
  .wifi { width: 42px; height: 29px; margin-right: 22px; }
  .percent { width: 56px; font-size: 23px; letter-spacing: -.7px; }
  .battery { width: 46px; height: 24px; margin-right: 28px; }
  .time { width: 194px; letter-spacing: -.2px; }
  .spot { width: 29px; height: 29px; margin-right: 31px; }
  .list { width: 37px; height: 20px; }

  .desktop { flex: 1; display: flex; background: linear-gradient(90deg, #b5aca5, #b3ab9d 10%, #b0a28e) 0 0 / 100% 200px no-repeat, linear-gradient(#2c4459, #344f66); }
  .dock { width: 70px; height: 1471px; margin-top: 34px; flex: none; border: 2px solid #2b2f40; border-left: 0; border-top-color: #51483e; border-radius: 0 14px 14px 0; background: linear-gradient(#7e705e, #85705b 11%, #6b5e54 16%, #465459 19%, #2a5068 23%, #2b5069 57%, #2c3e5b 82%, #2b3152); }
  .dock-group { display: flex; flex-direction: column; margin-left: 0; }
  .dock-group.main { margin-top: 4px; height: 1037px; }
  .dock-group.extra { height: 351px; }
  .dock-item { flex: 1; display: flex; align-items: center; }
  .dock-item i { width: 6px; height: 6px; border-radius: 50%; margin: 0 6px 0 4px; }
  .dock-item i.on { background: #b3cfe6; }
  .dock-item:nth-child(-n + 4) i.on { background: #fbe9d6; }
  .extra .dock-item i.on { background: #a5b5d2; }
  .dock-icon { width: 44px; height: 44px; }
  .dock hr { width: 50px; height: 2px; border: 0; margin: 10px 0 0 10px; background: #63718d; }
  .trash { margin-top: 12px; }
  .office-letter { font: 700 17px 'Open Sans', sans-serif; fill: #fff; }
  .sublime-letter { font: 800 24px Inter, sans-serif; fill: #f99b2f; }

  .window { flex: 1; position: relative; margin-top: 2px; display: flex; flex-direction: column; border-radius: 10px 10px 10px 10px; overflow: hidden; background: #f2f2f2; }
  .window::after { content: ''; position: absolute; left: 0; top: 100px; bottom: 0; width: 70px; background: linear-gradient(90deg, rgba(0, 0, 0, .075), transparent); pointer-events: none; }
  .titlebar { height: 100px; flex: none; display: flex; flex-direction: column; background: linear-gradient(#c9553c, #c5492f 50%, #be3e26); border-bottom: 2px solid #a33420; color: #f6dcd5; }
  .title-row { height: 52px; display: flex; align-items: center; }
  .lights { display: flex; gap: 14px; margin-left: 25px; }
  .lights b { width: 26px; height: 26px; border-radius: 50%; border: 1.500px solid #a5412e; background: #fb5f57; }
  .lights .yellow { background: #fdbc40; }
  .lights .green { background: #33c748; }
  .rule { width: 2px; height: 32px; margin: 0 31px 0 25px; background: #b1432c; }
  .quick { width: 300px; height: 30px; }
  .doc-title { display: flex; align-items: center; width: 904px; margin-left: 576px; font-size: 26px; letter-spacing: -.2px; }
  .doc-title span { margin: 5px 0 0 10px; }
  .doc-icon { width: 28px; height: 31px; }
  .doc-p { font: 700 13px 'Open Sans', sans-serif; fill: #fff; }
  .search { width: 428px; height: 38px; border-radius: 6px; background: #9e402b; display: flex; align-items: center; padding-left: 11px; font-size: 25px; letter-spacing: .1px; color: #d08b7b; }
  .search svg { width: 37px; height: 24px; margin-top: -3px; }
  .search span { margin: 2px 0 0 9px; }
  .share { width: 36px; height: 26px; margin-left: 31px; }
  .tabs { flex: 1; display: grid; grid-template-columns: 125px 126px 139px 190px 191px 191px 94px 104px 1fr; padding: 4px 0 0 45px; font-size: 26px; font-weight: 600; letter-spacing: -.1px; margin-bottom: -2px; }
  .tabs span { line-height: 43px; text-shadow: 0 1px 1px rgba(80, 20, 10, .3); }
  .tabs .active { background: #fbfbfb; color: #d0452b; text-align: center; border-radius: 5px 5px 0 0; text-shadow: none; }
  .feedback { width: 98px; height: 34px; justify-self: end; margin: 2px 33px 0 0; }

  .ribbon { height: 142px; flex: none; display: flex; padding: 8px 0 0 12px; border-bottom: 2px solid #c8c8c8; background: linear-gradient(#f9f9f9, #f3f3f3); }
  .tool { display: flex; flex-direction: column; align-items: center; font-size: 21px; line-height: 24px; text-align: center; color: #000; }
  .frame { width: 76px; height: 76px; flex: none; display: flex; align-items: center; justify-content: center; margin-bottom: 3px; }
  .frame.pressed { border: 2px solid #a8a8a8; border-radius: 6px; background: linear-gradient(#cfcfcf, #dadada 12%, #d2d2d2); box-shadow: 0 1px 0 #fff; }
  .w84 { width: 84px; } .w87 { width: 87px; } .w88 { width: 88px; } .w90 { width: 90px; } .w92 { width: 92px; }
  .divider { width: 2px; height: 124px; background: #e2e2e2; }
  .d1 { margin: 0 6px 0 13px; } .d2 { margin: 0 25px 0 10px; } .d3 { margin: 0 8px 0 9px; } .d4 { margin: 0 10px 0 16px; }
  .checks { width: 115px; display: flex; flex-direction: column; padding-top: 19px; gap: 34px; font-size: 21px; }
  .checks label { display: flex; align-items: center; gap: 15px; height: 26px; }
  .checks i { width: 26px; height: 26px; border: 2px solid #cdcdcd; border-radius: 5px; background: linear-gradient(#fdfdfd, #f2f2f2); }

  .workspace { flex: 1; min-height: 0; display: flex; }
  .thumbs { width: 303px; flex: none; border-right: 2px solid #c8c8c8; background: #f6f6f6; display: flex; padding: 20px 0 0 22px; }
  .thumbs b { width: 38px; font-size: 25px; line-height: 34px; color: #646464; }
  .thumb { width: 203px; height: 122px; border: 6px solid #d0462d; background: #fbfbfd; padding: 1px; }
  .slide-art { width: 100%; height: 100%; }
  .slide-text { font: 17.500px Lato, sans-serif; fill: #000; }
  .editor { width: 1585px; flex: none; display: flex; flex-direction: column; }
  .canvas { height: 1190px; flex: none; border-bottom: 1px solid #fff; background: linear-gradient(#fbfbfb, #e3e3e3); display: flex; align-items: center; justify-content: center; }
  .slide { width: 964px; height: 544px; margin: -3px 0 0 0; background: #fff; box-shadow: 0 0 0 1px #d8d8d8, 0 8px 26px 4px rgba(0, 0, 0, .09); }
  .notes { flex: 1; border-top: 2px solid #c8c8c8; background: #fff; padding-left: 16px; font: 26px/70px 'Liberation Sans', sans-serif; color: #000; }

  .pane { flex: 1; display: flex; flex-direction: column; border-left: 2px solid #c8c8c8; background: #f1f1f1; color: #333; font-size: 24px; letter-spacing: .35px; }
  .pane-head { height: 84px; display: flex; justify-content: space-between; padding: 13px 16px 0 36px; }
  h2 { margin: 0; font: 500 28px/30px Inter, sans-serif; letter-spacing: .1px; color: #000; }
  .pane-tabs { height: 74px; display: flex; padding-left: 24px; box-shadow: inset 0 -2px #cfcfcf; }
  .pane-tab { width: 88px; border: 2px solid #cfcfcf; border-bottom: 0; border-radius: 5px 5px 0 0; background: #f5f5f5; padding: 13px 0 0 20px; }
  .bucket { width: 44px; height: 48px; }
  .fill-head { height: 53px; margin-top: 10px; display: flex; align-items: center; gap: 10px; padding-left: 17px; font-size: 26px; letter-spacing: -.4px; border: 2px solid #cdcdcd; border-width: 2px 0; background: linear-gradient(#e5e5e5, #dedede); }
  .options { width: 528px; height: 226px; margin-left: 36px; padding-top: 14px; border-bottom: 2px solid #d2d2d2; }
  .radio { display: flex; align-items: center; height: 40px; margin-left: -2px; }
  .radio i { width: 32px; height: 32px; margin-right: 7px; border-radius: 50%; border: 1.500px solid #b2b2b2; border-top-color: #9a9a9a; background: #fff; box-shadow: inset 0 2px 2px rgba(0, 0, 0, .08); }
  .radio i.checked { border: 10.500px solid #419bf9; }
  .hide { display: flex; align-items: center; height: 40px; margin-top: 6px; }
  .hide i { width: 28px; height: 28px; margin-right: 9px; border: 1.500px solid #b4b4b4; border-radius: 5px; background: #fff; box-shadow: inset 0 2px 2px rgba(0, 0, 0, .06); }
  .row { display: flex; margin: 0 36px; }
  .color { height: 58px; padding-top: 12px; justify-content: space-between; line-height: 42px; padding-right: 0; }
  .color-btn { width: 73px; height: 47px; border: 2px solid #c4c4c4; border-radius: 5px; background: linear-gradient(#fafafa, #ececec); display: flex; align-items: center; padding: 0 6px 0 9px; justify-content: space-between; }
  .swatch { display: flex; flex-direction: column; align-items: center; width: 36px; }
  .swatch .bucket { width: 25px; height: 28px; }
  .swatch em { width: 36px; height: 9px; margin-top: 3px; border: 1px solid #e2e2e2; border-radius: 2px; background: #fff; }
  .transparency { padding-top: 13px; line-height: 44px; }
  .transparency > span { width: 168px; }
  .slider { width: 215px; height: 12px; margin: 19px 17px 0 0; border-radius: 6px; background: #b2b2b2; display: flex; align-items: center; }
  .slider i { width: 25px; height: 25px; border-radius: 50%; border: 2px solid #999; background: #fff; }
  .spin { width: 128px; height: 49px; border: 2px solid #bdbdbd; border-radius: 5px; background: #fff; display: flex; justify-content: space-between; padding: 4px 0 4px 11px; }
  .spin span { font-size: 22px; letter-spacing: -.5px; line-height: 41px; color: #222; }
  .steps { width: 28px; border-left: 2px solid #e2e2e2; display: grid; grid-template-rows: 1fr 1fr; place-items: center; background: linear-gradient(#e2e2e2, #e2e2e2) 0 50% / 100% 2px no-repeat; }
  .steps svg { width: 11px; height: 9px; }
  .buttons { margin-top: auto; display: flex; gap: 28px; padding: 0 0 20px 65px; }
  button { height: 41px; border: 1.500px solid #c6c6c6; border-bottom-color: #adadad; border-radius: 6px; background: #fff; font: 24px Inter, sans-serif; color: #222; padding: 0; }
  .apply { width: 183px; letter-spacing: -.2px; }
  .reset { width: 261px; border-color: #dedede; border-bottom-color: #cfcfcf; background: #f9f9f9; color: #b9b9b9; }

  .status { height: 46px; flex: none; border-top: 2px solid #a2a2a2; background: linear-gradient(#e3e3e3, #d4d4d4); display: flex; align-items: center; padding-left: 48px; font-size: 24px; color: #4b4b4b; }
  .count { width: 162px; letter-spacing: -.2px; }
  .lang { letter-spacing: .1px; }
  .status-right { display: flex; align-items: center; margin-left: auto; padding-right: 55px; height: 100%; }
  .s-notes { width: 107px; margin-left: 9px; letter-spacing: -.2px; }
  .s-comments { width: 142px; margin-left: 8px; }
  .normal-view { width: 74px; height: 44px; background: #a5a5a5; display: flex; align-items: center; justify-content: center; }
  .sorter { margin: 0 42px 0 20px; }
  .minus { width: 16px; height: 4px; margin: 0 14px 0 36px; background: #606060; }
  .zoom-track { width: 200px; height: 8px; border-radius: 4px; background: #999; display: flex; align-items: center; }
  .zoom-track em { width: 22px; height: 24px; border-radius: 12px; margin-left: 40px; background: #fff; box-shadow: 0 1px 3px #888; }
  .zoom-track b { width: 5px; height: 5px; border-radius: 50%; margin-left: 35px; background: #d5d5d5; }
  .plus { margin: 0 41px 0 14px; }
  .s-zoom { width: 100px; font-size: 23px; }
</style>
